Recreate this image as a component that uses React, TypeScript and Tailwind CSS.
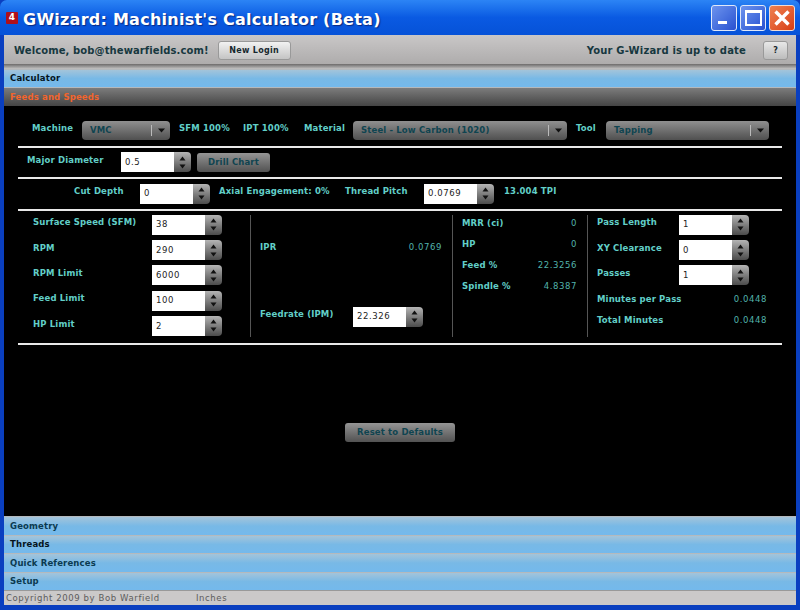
function Label({ children, className = "" }: { children: React.ReactNode; className?: string }) {
  return <span className={`text-[#62cfc8] font-bold text-[8.5px] tracking-[0.15px] whitespace-nowrap ${className}`}>{children}</span>;
}

function Value({ children, className = "" }: { children: React.ReactNode; className?: string }) {
  return <span className={`text-[#52b3ac] text-[8.5px] tracking-[0.6px] whitespace-nowrap ${className}`}>{children}</span>;
}

function Spinner({ value, className = "" }: { value: string; className?: string }) {
  return (
    <div className={`flex h-5 w-[70px] shrink-0 ${className}`}>
      <div className="w-[53px] bg-white text-[#222] text-[8.5px] tracking-[0.6px] pl-[4px] flex items-center">{value}</div>
      <div className="w-[17px] rounded-r-[4px] bg-gradient-to-b from-[#b5b5b5] to-[#4c4c4c] flex flex-col items-center justify-center gap-[3px]">
        <svg width="7" height="5" viewBox="0 0 7 5"><path d="M3.5 0.5 L6.5 4.5 L0.5 4.5 Z" fill="#111" /></svg>
        <svg width="7" height="5" viewBox="0 0 7 5"><path d="M0.5 0.5 L6.5 0.5 L3.5 4.5 Z" fill="#111" /></svg>
      </div>
    </div>
  );
}

function Combo({ value, className = "" }: { value: string; className?: string }) {
  return (
    <div className={`flex items-center h-[19px] rounded-[4px] bg-gradient-to-b from-[#909090] to-[#505050] shrink-0 ${className}`}>
      <span className="flex-1 pl-2 text-[#0f4450] font-bold text-[8.5px] tracking-[0.15px] whitespace-nowrap">{value}</span>
      <span className="h-[11px] w-px bg-[#bbb]" />
      <span className="w-[18px] flex justify-center">
        <svg width="7" height="5" viewBox="0 0 7 5"><path d="M0 0.5 L7 0.5 L3.5 4.5 Z" fill="#101010" /></svg>
      </span>
    </div>
  );
}

function DarkButton({ children, className = "" }: { children: React.ReactNode; className?: string }) {
  return (
    <div className={`flex items-center justify-center rounded-[3px] bg-gradient-to-b from-[#959595] to-[#525252] text-[#0f4450] font-bold text-[8.5px] tracking-[0.15px] ${className}`}>
      {children}
    </div>
  );
}

function Section({ title, dark = false, color = "text-[#0b3a50]" }: { title: string; dark?: boolean; color?: string }) {
  return (
    <div
      className={`h-[18.4px] flex items-center pl-[6px] font-bold text-[8.5px] tracking-[0.15px] border-t border-[#b4b9bd] ${
        dark ? "bg-gradient-to-b from-[#7c7c7c] to-[#454545] text-[#f2652d]" : `bg-gradient-to-b from-[#a3c4da] via-[#78b9e6] to-[#74b9ec] ${color}`
      }`}
    >
      {title}
    </div>
  );
}

function Divider() {
  return <div className="h-0.5 shrink-0 bg-[#e8e8e8]" />;
}

function StatRow({ label, value }: { label: string; value: string }) {
  return (
    <div className="flex items-center justify-between h-[21px]">
      <Label>{label}</Label>
      <Value>{value}</Value>
    </div>
  );
}

function InputRow({ label, value, labelWidth }: { label: string; value: string; labelWidth: string }) {
  return (
    <div className="flex items-center">
      <Label className={`mb-[4px] ${labelWidth}`}>{label}</Label>
      <Spinner value={value} />
    </div>
  );
}

export default function App() {
  return (
    <div className="w-[800px] h-[610px] overflow-hidden bg-[#0a3fc0] font-['DejaVu_Sans',sans-serif] flex flex-col">
      {/* title bar */}
      <div className="h-[35px] shrink-0 rounded-t-[7px] bg-gradient-to-b from-[#2c84f5] via-[#0a5ae2] to-[#0652d8] flex items-center pl-[6px] pr-[5px]">
        <div className="w-[12px] h-[12px] bg-[#b0101c] rounded-[1px] flex items-center justify-center text-white font-bold text-[9px] leading-none">4</div>
        <span className="ml-[5px] mt-[4px] text-white font-bold text-[16px] tracking-[0.25px] whitespace-nowrap [text-shadow:1px_1px_1px_#0a2a80]">GWizard: Machinist's Calculator (Beta)</span>
        <div className="ml-auto flex gap-[3px]">
          <div className="w-[26px] h-[26px] rounded-[3px] border border-[#dfe8fa] bg-gradient-to-br from-[#6d93ee] to-[#2a50d0] flex items-end pl-[6px] pb-[6px]">
            <div className="w-[9px] h-[3px] bg-white" />
          </div>
          <div className="w-[26px] h-[26px] rounded-[3px] border border-[#dfe8fa] bg-gradient-to-br from-[#6d93ee] to-[#2a50d0] flex items-center justify-center">
            <div className="w-[17px] h-[16px] border-2 border-t-[3px] border-white" />
          </div>
          <div className="w-[26px] h-[26px] rounded-[3px] border border-[#f0dcd4] bg-gradient-to-br from-[#ee8050] to-[#d83c10] flex items-center justify-center">
            <svg width="18" height="18" viewBox="0 0 18 18"><path d="M2.5 2.5 L15.5 15.5 M15.5 2.5 L2.5 15.5" stroke="#fff" strokeWidth="3.4" /></svg>
          </div>
        </div>
      </div>

      <div className="flex-1 mx-[4px] flex flex-col min-h-0">
        {/* welcome bar */}
        <div className="h-[29px] shrink-0 bg-gradient-to-b from-[#c9c7c7] to-[#aeacac] flex items-center pt-[2px] pl-[10px] pr-[8px]">
          <span className="text-[#17383f] font-bold text-[10px] tracking-[0.1px] whitespace-nowrap">Welcome, bob@thewarfields.com!</span>
          <div className="ml-[9px] w-[73px] h-[19px] rounded-[3px] border border-[#999] bg-gradient-to-b from-[#f2f2f2] to-[#c4c4c4] flex items-center justify-center text-[#17282e] font-bold text-[8px] tracking-[0.3px]">New Login</div>
          <span className="ml-auto text-[#17383f] font-bold text-[10px] tracking-[0.18px] whitespace-nowrap">Your G-Wizard is up to date</span>
          <div className="ml-[17px] w-[25px] h-[19px] rounded-[3px] border border-[#999] bg-gradient-to-b from-[#e8e8e8] to-[#bcbcbc] flex items-center justify-center text-[#17282e] font-bold text-[8px]">?</div>
        </div>
        <div className="h-[5px] shrink-0 bg-gradient-to-b from-[#6d6b6b] to-[#c4c4c4]" />

        <Section title="Calculator" color="text-[#05141c]" />
        <Section title="Feeds and Speeds" dark />

        {/* main panel */}
        <div className="flex-1 bg-black min-h-0 px-[14px] pt-[15px] flex flex-col">
          <div className="flex items-center h-[19px] mb-[6px] pl-[14px]">
            <Label className="w-[50px] mb-[4px]">Machine</Label>
            <Combo value="VMC" className="w-[88px]" />
            <Label className="ml-[9px] w-[64px] mb-[4px]">SFM 100%</Label>
            <Label className="w-[61px] mb-[4px]">IPT 100%</Label>
            <Label className="w-[49px] mb-[4px]">Material</Label>
            <Combo value="Steel - Low Carbon (1020)" className="w-[214px]" />
            <Label className="ml-[9px] w-[30px] mb-[4px]">Tool</Label>
            <Combo value="Tapping" className="w-[163px]" />
          </div>
          <Divider />
          <div className="flex items-center h-[29px] pl-[9px]">
            <Label className="w-[94px] mb-[4px]">Major Diameter</Label>
            <Spinner value="0.5" />
            <DarkButton className="ml-[6px] w-[73px] h-[19px]">Drill Chart</DarkButton>
          </div>
          <Divider />
          <div className="flex items-center h-[30px] pl-[56px]">
            <Label className="w-[66px] mb-[4px]">Cut Depth</Label>
            <Spinner value="0" />
            <Label className="ml-[9px] w-[126px] mb-[4px]">Axial Engagement: 0%</Label>
            <Label className="w-[79px] mb-[4px]">Thread Pitch</Label>
            <Spinner value="0.0769" />
            <Label className="ml-[10px] mb-[4px]">13.004 TPI</Label>
          </div>
          <Divider />

          <div className="flex h-[132px] pt-[4px]">
            <div className="w-[233px] h-[122px] border-r border-[#555] pl-[15px] flex flex-col gap-[5.3px]">
              <InputRow label="Surface Speed (SFM)" value="38" labelWidth="w-[119px]" />
              <InputRow label="RPM" value="290" labelWidth="w-[119px]" />
              <InputRow label="RPM Limit" value="6000" labelWidth="w-[119px]" />
              <InputRow label="Feed Limit" value="100" labelWidth="w-[119px]" />
              <InputRow label="HP Limit" value="2" labelWidth="w-[119px]" />
            </div>
            <div className="w-[202px] h-[122px] border-r border-[#555] pl-[9px] pr-[10px] flex flex-col">
              <div className="flex items-center justify-between h-5 mt-[23px]">
                <Label>IPR</Label>
                <Value>0.0769</Value>
              </div>
              <div className="flex items-center justify-between mt-[49px]">
                <Label className="mb-[4px]">Feedrate (IPM)</Label>
                <Spinner value="22.326" className="mr-[19px]" />
              </div>
            </div>
            <div className="w-[135px] h-[122px] border-r border-[#555] pl-[9px] pr-[10px]">
              <div className="-mt-[2px]">
                <StatRow label="MRR (ci)" value="0" />
                <StatRow label="HP" value="0" />
                <StatRow label="Feed %" value="22.3256" />
                <StatRow label="Spindle %" value="4.8387" />
              </div>
            </div>
            <div className="flex-1 h-[122px] pl-[9px] pr-[15px] flex flex-col">
              <div className="flex flex-col gap-[5.3px]">
                <InputRow label="Pass Length" value="1" labelWidth="w-[82px]" />
                <InputRow label="XY Clearance" value="0" labelWidth="w-[82px]" />
                <InputRow label="Passes" value="1" labelWidth="w-[82px]" />
              </div>
              <div className="mt-[3px]">
                <StatRow label="Minutes per Pass" value="0.0448" />
                <StatRow label="Total Minutes" value="0.0448" />
              </div>
            </div>
          </div>
          <Divider />

          <div className="flex justify-center mt-[78px]">
            <DarkButton className="w-[110px] h-[19px]">Reset to Defaults</DarkButton>
          </div>
        </div>

        <Section title="Geometry" />
        <Section title="Threads" color="text-[#05141c]" />
        <Section title="Quick References" />
        <Section title="Setup" />

        {/* status bar */}
        <div className="h-[15px] shrink-0 bg-[#cbc9c9] flex items-center pl-[2px] text-[#5c5c5c] text-[8.5px] tracking-[0.6px] border-t border-[#999]">
          <span className="w-[190px]">Copyright 2009 by Bob Warfield</span>
          <span>Inches</span>
        </div>
      </div>
      <div className="h-[5px] shrink-0" />
    </div>
  );
}
